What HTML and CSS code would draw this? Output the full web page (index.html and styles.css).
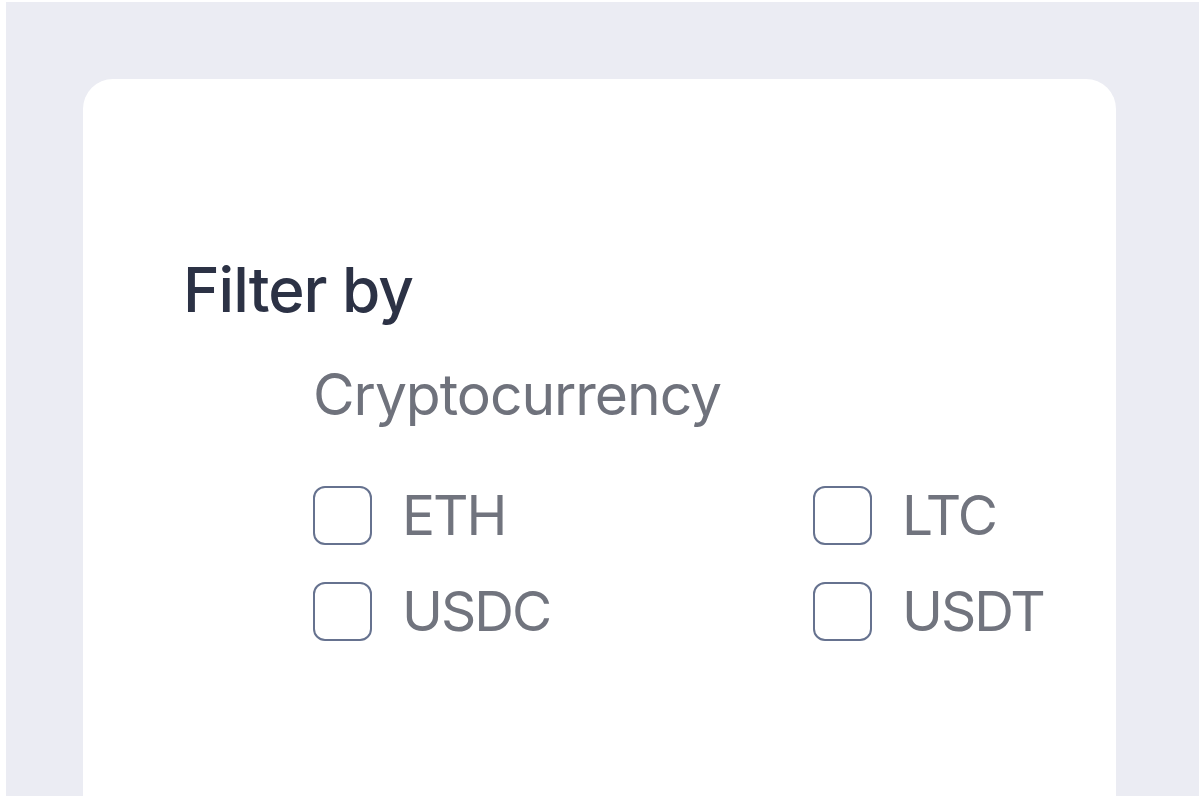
FILE: index.html
```html
<!DOCTYPE html>
<html lang="en">
<head>
<meta charset="utf-8">
<title>Filter by</title>
<link rel="stylesheet" href="styles.css">
</head>
<body>
<div class="frame">
  <div class="card">
    <h1 class="title">Filter by</h1>
    <div class="group">
      <h2 class="group-title">Cryptocurrency</h2>
      <div class="options">
        <label class="option"><span class="box"></span><span class="label">ETH</span></label>
        <label class="option"><span class="box"></span><span class="label">LTC</span></label>
        <label class="option"><span class="box"></span><span class="label">USDC</span></label>
        <label class="option"><span class="box"></span><span class="label">USDT</span></label>
      </div>
    </div>
  </div>
</div>
</body>
</html>
```

FILE: styles.css
```css
html, body {
  margin: 0;
  padding: 0;
  background: #ffffff;
}
body {
  font-family: "Inter", "Liberation Sans", sans-serif;
  width: 1200px;
  height: 800px;
  overflow: hidden;
}
.frame {
  margin: 2px 1px 0 6px;
  height: 794px;
  background: #ebecf3;
  padding: 77px 83px 0 77px;
  box-sizing: border-box;
  display: flex;
  flex-direction: column;
}
.card {
  flex: 1;
  background: #ffffff;
  border-radius: 30px 30px 0 0;
  padding: 180px 0 0 100px;
}
.title {
  margin: 0;
  font-size: 62px;
  line-height: 1;
  font-weight: 500;
  color: #2c3245;
  letter-spacing: -1px;
}
.group {
  padding-left: 130px;
  margin-top: 45px;
}
.group-title {
  margin: 0;
  font-size: 57px;
  line-height: 1;
  font-weight: 400;
  color: #6f727c;
  letter-spacing: -1.05px;
}
.options {
  display: grid;
  grid-template-columns: 500px 1fr;
  row-gap: 37px;
  margin-top: 63px;
}
.option {
  display: flex;
  align-items: center;
  gap: 30px;
}
.box {
  width: 55px;
  height: 55px;
  border: 2px solid #66728f;
  border-radius: 12px;
  flex: none;
}
.label {
  font-size: 55px;
  line-height: 1;
  color: #71747e;
  letter-spacing: -2px;
}
```
